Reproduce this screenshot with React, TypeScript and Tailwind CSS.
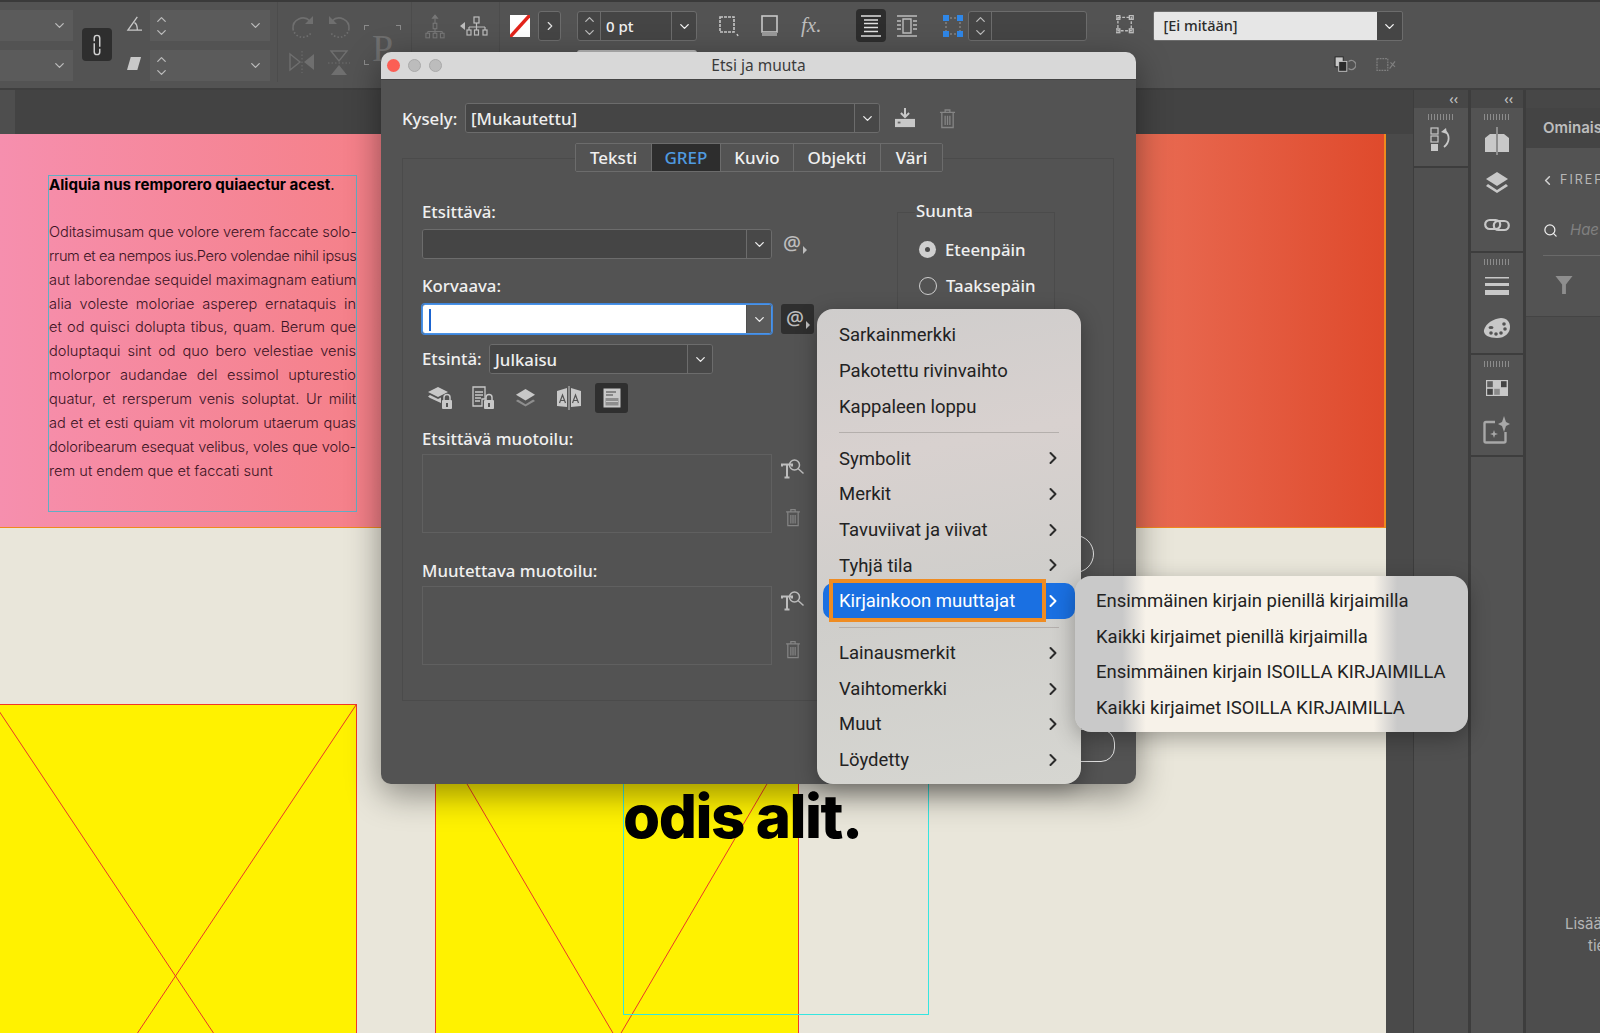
import { ChevronDown, ChevronUp, ChevronRight, ChevronLeft, Search } from "lucide-react";

const ui = "font-['Noto_Sans',sans-serif] font-medium";
const mac = "font-['Roboto',sans-serif]";

function Trash({ className = "" }: { className?: string }) {
  return (
    <svg viewBox="0 0 18 22" className={className} fill="none" stroke="#858585" strokeWidth="1.4">
      <path d="M1 4.5h16M6.5 4.5V2h5v2.5M3 4.5V20.5h12V4.5M6.5 8v10M9 8v10M11.5 8v10" />
    </svg>
  );
}

function AtButton({ active = false }: { active?: boolean }) {
  return (
    <div className={`relative flex h-[30px] w-[33px] items-center justify-center rounded-[3px] ${active ? "bg-[#2f2f2f]" : ""}`}>
      <span className={`${ui} -mt-[2px] -ml-[5px] text-[20px] text-[#bdbdbd]`}>@</span>
      <span className="absolute right-[4px] bottom-[5px] h-0 w-0 border-y-[4px] border-l-[4px] border-y-transparent border-l-[#bdbdbd]" />
    </div>
  );
}

function Field({ width, chevWidth = 25, white = false, text }: { width: number; chevWidth?: number; white?: boolean; text?: string }) {
  return (
    <div
      style={{ width }}
      className={`flex h-[30px] shrink-0 overflow-hidden rounded-[3px] border ${white ? "border-[#4b93e6] ring-1 ring-[#3f86dc]" : "border-[#6c6c6c]"}`}
    >
      <div className={`flex flex-1 items-center px-[5px] pt-[1px] text-[16.8px] text-[#eeeeee] ${white ? "bg-white" : "bg-[#454545]"}`}>
        {white ? <span className="ml-[1px] h-[22px] w-[2px] bg-[#1b64d0]" /> : text}
      </div>
      <div
        style={{ width: chevWidth }}
        className={`flex items-center justify-center border-l ${white ? "border-[#4f4f4f] bg-[#5a5a5a]" : "border-[#6c6c6c] bg-[#484848]"}`}
      >
        <ChevronDown size={15} strokeWidth={2.2} className="text-[#e8e8e8]" />
      </div>
    </div>
  );
}

function TypeSearch({ className = "" }: { className?: string }) {
  return (
    <svg viewBox="0 0 24 20" className={className} fill="none" stroke="#bdbdbd" strokeWidth="1.5">
      <path d="M1 7.5V5.5h10v2M6 5.5V18M3.5 18.5h5" strokeWidth="2" />
      <circle cx="13.5" cy="6" r="5" />
      <path d="M17 9.5l5.5 5" />
    </svg>
  );
}

function SearchIcons({ active }: { active: number }) {
  const icons = [
    <svg key="a" viewBox="0 0 26 24" className="h-[24px] w-[26px]">
      <path d="M11 1l10 5-10 5L1 6z" fill="#c8c8c8" />
      <path d="M3 9l8 4 3-1.5V17L3 12l-2-1.5z" fill="#c8c8c8" />
      <rect x="15" y="14" width="10" height="9" rx="1" fill="#c8c8c8" />
      <path d="M17 14v-2.5a3 3 0 016 0V14" fill="none" stroke="#c8c8c8" strokeWidth="1.5" />
      <rect x="19" y="17" width="2" height="4" fill="#535353" />
    </svg>,
    <svg key="b" viewBox="0 0 24 24" className="h-[24px] w-[24px]">
      <path d="M2 1h12v12H11v7H2z" fill="none" stroke="#c8c8c8" strokeWidth="1.3" />
      <path d="M4 6h8M4 9h8M4 12h6M4 15h5" stroke="#c8c8c8" strokeWidth="1.3" />
      <rect x="13" y="14" width="10" height="9" rx="1" fill="#c8c8c8" />
      <path d="M15 14v-2.5a3 3 0 016 0V14" fill="none" stroke="#c8c8c8" strokeWidth="1.5" />
      <rect x="17" y="17" width="2" height="4" fill="#535353" />
    </svg>,
    <svg key="c" viewBox="0 0 24 22" className="h-[21px] w-[23px]">
      <path d="M12 1l10 6-10 6L2 7z" fill="#c8c8c8" />
      <path d="M4 12l8 5 8-5 2 1.5-10 6-10-6z" fill="#8e8e8e" />
    </svg>,
    <svg key="d" viewBox="0 0 26 24" className="h-[24px] w-[26px]">
      <path d="M1 5l10-3v19l-10-1zM25 5l-10-3v19l10-1z" fill="#c8c8c8" />
      <path d="M13 0v24" stroke="#c8c8c8" strokeWidth="1" />
      <path d="M3.5 17l3-8 3 8M4.5 14.5h4M16.5 17l3-8 3 8M17.5 14.5h4" fill="none" stroke="#535353" strokeWidth="1.2" />
    </svg>,
    <svg key="e" viewBox="0 0 18 20" className="h-[20px] w-[18px]">
      <rect x="0.5" y="0.5" width="17" height="19" fill="#c8c8c8" />
      <path d="M3 4h10M3 7h7" stroke="#444" strokeWidth="1.2" />
      <rect x="2.5" y="10" width="13" height="7.5" fill="#8e8e8e" />
      <path d="M3 13.5h12" stroke="#c8c8c8" strokeWidth="1" />
    </svg>,
  ];
  return (
    <div className="mt-[9px] flex h-[30px] items-center pl-[1px]">
      {icons.map((icon, i) => (
        <div key={i} className={`flex h-[30px] w-[33px] items-center justify-center rounded-[3px] ${i < 4 ? "mr-[10px]" : ""} ${i === active ? "bg-[#2f2f2f]" : ""}`}>
          {icon}
        </div>
      ))}
    </div>
  );
}

function FormatBox() {
  return (
    <div className="mt-[5px] flex items-start">
      <div className="h-[79px] w-[350px] border border-[#606060] bg-[#535353]" />
      <div className="ml-[9px] flex h-[79px] w-[24px] flex-col items-center justify-between pt-[5px] pb-[6px]">
        <TypeSearch className="h-[20px] w-[24px]" />
        <Trash className="h-[19px] w-[16px]" />
      </div>
    </div>
  );
}

function Dialog() {
  const tabs = [
    { label: "Teksti", w: 76 },
    { label: "GREP", w: 69, active: true },
    { label: "Kuvio", w: 73 },
    { label: "Objekti", w: 87 },
    { label: "Väri", w: 61 },
  ];
  return (
    <div className={`${ui} absolute top-[52px] left-[381px] flex h-[732px] w-[755px] flex-col overflow-hidden rounded-[10px] bg-[#535353] shadow-[0_10px_34px_rgba(0,0,0,0.42)]`}>
      <div className="relative flex h-[28px] shrink-0 items-center justify-center border-b border-[#444] bg-[#d8d8d8] pt-[1px] text-[15.5px] font-normal text-[#3b3b3b]">
        <div className="absolute top-[7px] left-[6px] flex gap-[8px]">
          <span className="h-[13px] w-[13px] rounded-full bg-[#fb5f55]" />
          <span className="h-[13px] w-[13px] rounded-full border border-[#a9a9a9] bg-[#bcbcbc]" />
          <span className="h-[13px] w-[13px] rounded-full border border-[#a9a9a9] bg-[#bcbcbc]" />
        </div>
        Etsi ja muuta
      </div>

      <div className="mt-[23px] flex h-[30px] items-center pl-[21px] text-[16.8px] text-[#f0f0f0]">
        <span className="w-[63px] pt-[1px]">Kysely:</span>
        <Field width={415} text="[Mukautettu]" />
        <svg viewBox="0 0 24 22" className="ml-[14px] h-[20px] w-[22px]">
          <path d="M12 0v9M7.5 5.5L12 10l4.5-4.5" fill="none" stroke="#c8c8c8" strokeWidth="2.2" />
          <rect x="1" y="12" width="22" height="9" fill="#c8c8c8" />
          <rect x="4" y="15" width="3" height="2" fill="#666" />
        </svg>
        <Trash className="ml-[23px] h-[21px] w-[17px]" />
      </div>

      <div className="relative z-10 mt-[10px] ml-[194px] flex h-[29px] w-fit overflow-hidden rounded-[2px] border border-[#6c6c6c] text-[17px]">
        {tabs.map((t) => (
          <div
            key={t.label}
            style={{ width: t.w }}
            className={`flex items-center justify-center border-r border-[#6c6c6c] last:border-r-0 ${t.active ? "bg-[#2d2d2d] text-[#4f9be0]" : "bg-[#535353] text-[#f0f0f0]"}`}
          >
            {t.label}
          </div>
        ))}
      </div>

      <div className="-mt-[14px] ml-[21px] flex h-[543px] w-[712px] border border-[#4b4b4b] pl-[19px] text-[16.8px] text-[#f0f0f0]">
        <div className="w-[475px] pt-[43px]">
          <div className="h-[20px] leading-[20px]">Etsittävä:</div>
          <div className="mt-[7px] flex items-center">
            <Field width={350} />
            <div className="ml-[6px]"><AtButton /></div>
          </div>
          <div className="mt-[17px] h-[20px] leading-[20px]">Korvaava:</div>
          <div className="mt-[8px] flex items-center">
            <Field width={350} white />
            <div className="ml-[9px]"><AtButton active /></div>
          </div>
          <div className="mt-[10px] flex items-center">
            <span className="w-[67px]">Etsintä:</span>
            <Field width={224} text="Julkaisu" />
          </div>
          <SearchIcons active={4} />
          <div className="mt-[16px] h-[20px] leading-[20px]">Etsittävä muotoilu:</div>
          <FormatBox />
          <div className="mt-[28px] h-[20px] leading-[20px]">Muutettava muotoilu:</div>
          <FormatBox />
        </div>
        <div className="mt-[53px] h-[150px] w-[158px] border border-[#4b4b4b]">
          <div className="-mt-[12px] ml-[17px] w-fit bg-[#535353] px-[1px] leading-[20px]">Suunta</div>
          <div className="mt-[16px] ml-[21px] flex items-center gap-[9px]">
            <span className="flex h-[17px] w-[17px] items-center justify-center rounded-full bg-[#cfcfcf]">
              <span className="h-[5px] w-[5px] rounded-full bg-[#4a4a4a]" />
            </span>
            Eteenpäin
          </div>
          <div className="mt-[11px] ml-[21px] flex items-center gap-[9px]">
            <span className="h-[18px] w-[18px] rounded-full border border-[#cfcfcf]" />
            Taaksepäin
          </div>
        </div>
      </div>

      {/* buttons behind the open menu */}
      <div className="absolute top-[483px] left-[600px] h-[38px] w-[113px] rounded-full border border-[#e2e2e2]" />
      <div className="absolute top-[677px] left-[620px] h-[33px] w-[114px] rounded-[14px] border border-[#e2e2e2]" />
    </div>
  );
}

function MenuRow({ label, arrow = true, hl = false }: { label: string; arrow?: boolean; hl?: boolean }) {
  return (
    <div className={`relative mx-[6px] flex h-[35.7px] items-center rounded-[10px] pr-[12px] pl-[16px] ${hl ? "bg-[#1a70e2] text-white" : "text-[#222222]"}`}>
      <span className="flex-1 pt-[2px]">{label}</span>
      {arrow && <ChevronRight size={20} strokeWidth={2.4} className={hl ? "text-white" : "text-[#2b2b2b]"} />}
      {hl && <div className="absolute -top-[4px] left-[6px] h-[43px] w-[217px] border-[4px] border-[#ef8c22]" />}
    </div>
  );
}

function Sep() {
  return (
    <div className="flex h-[16px] items-center px-[22px]">
      <div className="h-px w-full bg-[#b4afac]" />
    </div>
  );
}

function Menus() {
  const sub = [
    "Ensimmäinen kirjain pienillä kirjaimilla",
    "Kaikki kirjaimet pienillä kirjaimilla",
    "Ensimmäinen kirjain ISOILLA KIRJAIMILLA",
    "Kaikki kirjaimet ISOILLA KIRJAIMILLA",
  ];
  return (
    <>
      <div className={`${mac} absolute top-[309px] left-[817px] h-[475px] w-[264px] rounded-[16px] bg-[linear-gradient(170deg,#cfcdcc_0%,#d8d1cf_30%,#cfcecb_60%,#d6d6d1_100%)] pt-[8.5px] text-[18.5px] shadow-[0_6px_22px_rgba(0,0,0,0.3)]`}>
        <MenuRow label="Sarkainmerkki" arrow={false} />
        <MenuRow label="Pakotettu rivinvaihto" arrow={false} />
        <MenuRow label="Kappaleen loppu" arrow={false} />
        <Sep />
        <MenuRow label="Symbolit" />
        <MenuRow label="Merkit" />
        <MenuRow label="Tavuviivat ja viivat" />
        <MenuRow label="Tyhjä tila" />
        <MenuRow label="Kirjainkoon muuttajat" hl />
        <Sep />
        <MenuRow label="Lainausmerkit" />
        <MenuRow label="Vaihtomerkki" />
        <MenuRow label="Muut" />
        <MenuRow label="Löydetty" />
      </div>
      <div className={`${mac} absolute top-[576px] left-[1075px] h-[156px] w-[393px] rounded-[16px] bg-[linear-gradient(90deg,#c9c9c9_0%,#c9c9c9_12%,#f7f2e9_18%,#f7f2e9_76%,#c9c9c9_82%,#c9c9c9_100%)] pt-[7px] text-[18.5px] text-[#222222] shadow-[0_6px_22px_rgba(0,0,0,0.3)]`}>
        {sub.map((s) => (
          <div key={s} className="flex h-[35.7px] items-center pt-[2px] pl-[21px]">{s}</div>
        ))}
      </div>
    </>
  );
}

function XBox({ className }: { className: string }) {
  return (
    <div className={`relative shrink-0 border border-[#f0392a] bg-[#fff200] ${className}`}>
      <svg viewBox="0 0 100 100" preserveAspectRatio="none" className="absolute inset-0 h-full w-full">
        <path d="M0 0L100 100M100 0L0 100" stroke="#e8372a" strokeWidth="1" vectorEffect="non-scaling-stroke" fill="none" />
      </svg>
    </div>
  );
}

function Page() {
  const lines = [
    { t: "Oditasimusam que volore verem faccate solo-", c: "tracking-[-0.1px]" },
    { t: "rrum et ea nempos ius.Pero volendae nihil ipsus", c: "tracking-[-0.38px]" },
    { t: "aut laborendae sequidel maximagnam eatium", c: "" },
    { t: "alia voleste moloriae asperep ernataquis in", c: "" },
    { t: "et od quisci dolupta tibus, quam. Berum que", c: "" },
    { t: "doluptaqui sint od quo bero velestiae venis", c: "" },
    { t: "molorpor audandae del essimol upturestio", c: "" },
    { t: "quatur, et rersperum venis soluptat. Ur milit", c: "" },
    { t: "ad et et esti quiam vit molorum utaerum quas", c: "tracking-[-0.1px]" },
    { t: "doloribearum esequat velibus, voles que volo-", c: "tracking-[-0.2px]" },
  ];
  return (
    <div className="relative h-full w-[1386px] overflow-hidden bg-[#e9e6da] font-['Inter',sans-serif]">
      <div className="h-[394px] border-r-2 border-b border-[#ef8a1d] bg-[linear-gradient(90deg,#f68fae_0%,#f58088_27%,#e96c54_82%,#df4a2c_100%)] pt-[41px] pl-[48px]">
        <div className="h-[337px] w-[309px] border border-[#62adc4] text-[14.6px] leading-[23.9px] text-[#3c1424]">
          <div className="-mt-[3px] text-[15.1px] font-bold text-black">
            Aliquia nus remporero quiaectur acest<span className="font-normal">.</span>
          </div>
          <div className="h-[23.9px]" />
          {lines.map((l) => (
            <div key={l.t} className={`font-light whitespace-nowrap [text-align-last:justify] ${l.c}`}>{l.t}</div>
          ))}
          <div className="font-light">rem ut endem que et faccati sunt</div>
        </div>
      </div>
      <div className="flex pt-[176px]">
        <XBox className="-ml-[6px] h-[544px] w-[363px]" />
        <XBox className="mt-[26px] ml-[78px] h-[620px] w-[364px]" />
      </div>
      <div className="absolute top-[560px] left-[623px] h-[321px] w-[306px] border border-[#35e5e0]" />
      <div className="absolute top-[646px] left-[623px] text-[60px] leading-[72px] font-extrabold tracking-[-1.45px] text-black">odis alit.</div>
    </div>
  );
}

function Grip() {
  return <div className="mx-auto h-[6px] w-[26px] bg-[repeating-linear-gradient(90deg,#8c8c8c_0,#8c8c8c_1px,transparent_1px,transparent_3px)]" />;
}

function PanelIcon({ children }: { children: React.ReactNode }) {
  return <div className="flex h-[42px] items-center justify-center">{children}</div>;
}

function Panels() {
  return (
    <div className="flex h-full w-[187px] bg-[#3d3d3d] pl-[1px]">
      <div className="w-[54px]">
        <div className="flex h-[18px] items-center justify-end bg-[#474747] pr-[10px] text-[14px] leading-none text-[#c8c8c8]">‹‹</div>
        <div className="h-[60px] border-b-2 border-[#3d3d3d] bg-[#535353] pt-[6px]">
          <Grip />
          <div className="mt-[7px] flex justify-center">
            <svg viewBox="0 0 22 26" className="h-[26px] w-[22px]" fill="none">
              <rect x="1" y="1" width="7" height="6" stroke="#c8c8c8" strokeWidth="1.2" />
              <rect x="1" y="9" width="7" height="6" stroke="#c8c8c8" strokeWidth="1.2" />
              <rect x="1" y="17" width="7" height="7" fill="#c8c8c8" />
              <path d="M15 4c5 4 5 11-1 16" stroke="#c8c8c8" strokeWidth="1.8" />
              <path d="M11 5l5-4 1 6z" fill="#c8c8c8" />
            </svg>
          </div>
        </div>
        <div className="h-[865px] bg-[#505050]" />
      </div>
      <div className="ml-[3px] w-[52px]">
        <div className="flex h-[18px] items-center justify-end bg-[#474747] pr-[10px] text-[14px] leading-none text-[#c8c8c8]">‹‹</div>
        <div className="h-[145px] border-b-2 border-[#3d3d3d] bg-[#535353] pt-[6px]">
          <Grip />
          <PanelIcon>
            <svg viewBox="0 0 26 28" className="h-[28px] w-[26px]">
              <path d="M1 11l5-4h6v18H1zM25 11l-5-4h-6v18h11z" fill="#c8c8c8" />
              <path d="M13 0v28" stroke="#c8c8c8" strokeWidth="1" />
            </svg>
          </PanelIcon>
          <PanelIcon>
            <svg viewBox="0 0 24 24" className="h-[24px] w-[24px]">
              <path d="M12 1l11 7-11 7L1 8z" fill="#c8c8c8" />
              <path d="M3 13l9 6 9-6 2 2-11 7L1 15z" fill="#c8c8c8" />
            </svg>
          </PanelIcon>
          <PanelIcon>
            <svg viewBox="0 0 26 14" className="h-[14px] w-[26px]" fill="none" stroke="#c8c8c8" strokeWidth="2.2">
              <rect x="1.2" y="2" width="15" height="9" rx="4.5" />
              <rect x="9.8" y="3" width="15" height="9" rx="4.5" />
            </svg>
          </PanelIcon>
        </div>
        <div className="h-[102px] border-b-2 border-[#3d3d3d] bg-[#535353] pt-[6px]">
          <Grip />
          <PanelIcon>
            <svg viewBox="0 0 24 20" className="h-[20px] w-[24px]">
              <rect y="1" width="24" height="1.5" fill="#c8c8c8" />
              <rect y="7" width="24" height="3" fill="#c8c8c8" />
              <rect y="14" width="24" height="5" fill="#c8c8c8" />
            </svg>
          </PanelIcon>
          <PanelIcon>
            <svg viewBox="0 0 28 22" className="h-[22px] w-[28px]">
              <path d="M1 13C3 6 10 2 18 1c6 0 9 4 9 9 0 6-5 11-13 11C6 21 0 18 1 13z" fill="#c8c8c8" />
              <circle cx="21" cy="7" r="1.8" fill="#535353" />
              <circle cx="22" cy="12" r="1.8" fill="#535353" />
              <circle cx="18" cy="16" r="1.8" fill="#535353" />
              <circle cx="13" cy="17" r="1.8" fill="#535353" />
              <circle cx="8" cy="16" r="1.8" fill="#535353" />
              <ellipse cx="8" cy="10.5" rx="2.5" ry="1.5" fill="#535353" />
            </svg>
          </PanelIcon>
        </div>
        <div className="h-[102px] border-b-2 border-[#3d3d3d] bg-[#535353] pt-[6px]">
          <Grip />
          <PanelIcon>
            <svg viewBox="0 0 22 16" className="h-[16px] w-[22px]">
              <rect width="22" height="16" fill="#c8c8c8" />
              <rect x="1.2" y="1.2" width="5.6" height="6" fill="#5f5f5f" />
              <rect x="15" y="1.2" width="5.6" height="6" fill="#444" />
              <rect x="1.2" y="8.8" width="5.6" height="6" fill="#444" />
              <rect x="8.2" y="8.8" width="5.6" height="6" fill="#8a8a8a" />
            </svg>
          </PanelIcon>
          <PanelIcon>
            <svg viewBox="0 0 28 30" className="h-[30px] w-[28px]" fill="none">
              <path d="M12 7H3a1.5 1.5 0 00-1.5 1.5V26A1.5 1.5 0 003 27.5h18a1.5 1.5 0 001.5-1.5V17" stroke="#a8a8a8" strokeWidth="2.4" />
              <path d="M21 1l2 6 4 2-4 2-2 6-2-6-4-2 4-2z" fill="#a8a8a8" />
              <path d="M11 15l1 3 3 1-3 1-1 3-1-3-3-1 3-1z" fill="#a8a8a8" />
            </svg>
          </PanelIcon>
        </div>
        <div className="h-[600px] bg-[#535353]" />
      </div>
      <div className="ml-[3px] flex-1 overflow-hidden bg-[#4d4d4d] whitespace-nowrap">
        <div className="h-[18px] bg-[#474747]" />
        <div className="flex h-[40px] items-center bg-[#444444] pl-[17px] font-['Inter',sans-serif] text-[15px] font-semibold text-[#bdbdbd]">Ominaisuudet</div>
        <div className="h-[169px] border-b border-[#444] bg-[#535353] font-['Inter',sans-serif]">
          <div className="flex h-[64px] items-center pl-[14px] text-[12.5px] tracking-[2px] text-[#b8b8b8]">
            <ChevronLeft size={15} strokeWidth={2.5} className="mr-[5px] shrink-0 text-[#d0d0d0]" />
            FIREFLY
          </div>
          <div className="ml-[17px] flex h-[44px] items-center border-b border-[#6a6a6a] pb-[6px]">
            <Search size={15} className="shrink-0 text-[#eeeeee]" />
            <span className="ml-[12px] text-[15px] text-[#808080] italic">Hae</span>
          </div>
          <div className="flex items-center pt-[20px] pl-[29px]">
            <svg viewBox="0 0 18 20" className="h-[19px] w-[18px]">
              <path d="M0 0h18l-7 9v10H7V9z" fill="#8e8e8e" />
            </svg>
          </div>
        </div>
        <div className="pt-[596px] pl-[39px] font-['Inter',sans-serif] text-[15px] leading-[22px] text-[#b5b5b5]">
          <div>Lisää</div>
          <div className="pl-[23px]">tietoja</div>
        </div>
      </div>
    </div>
  );
}

function ToolChevron() {
  return <ChevronDown size={15} strokeWidth={2} className="text-[#bcbcbc]" />;
}

function Stepper() {
  return (
    <div className="flex flex-col items-center">
      <ChevronUp size={15} strokeWidth={2} className="-mb-[2px] text-[#bcbcbc]" />
      <ChevronDown size={15} strokeWidth={2} className="text-[#bcbcbc]" />
    </div>
  );
}

function Toolbar() {
  const dim = "#6f6f6f";
  return (
    <div className="flex h-[90px] shrink-0 border-t-2 border-b-2 border-t-[#3a3a3a] border-b-[#3f3f3f] bg-[#535353] font-['Noto_Sans',sans-serif] text-[#f0f0f0]">
      {/* font and size fields */}
      <div className="flex w-[73px] flex-col gap-[9px] pt-[8px]">
        {[0, 1].map((i) => (
          <div key={i} className="flex h-[31px] items-center justify-end bg-[#5b5b5b] pr-[6px]"><ToolChevron /></div>
        ))}
      </div>
      <div className="mt-[26px] ml-[9px] flex h-[33px] w-[30px] items-center justify-center rounded-[4px] bg-[#2e2e2e]">
        <svg viewBox="0 0 10 24" className="h-[22px] w-[10px]" fill="none" stroke="#d0d0d0" strokeWidth="1.6">
          <path d="M2 8V4.5a3 3 0 016 0V14M8 16v3.5a3 3 0 01-6 0V10" />
        </svg>
      </div>
      <div className="ml-[12px] flex w-[20px] flex-col items-center pt-[14px]">
        <svg viewBox="0 0 18 16" className="h-[15px] w-[17px]" fill="none" stroke="#c8c8c8" strokeWidth="1.4">
          <path d="M12 1L2 15h15M9 7c2 1 3 4 3 8" />
        </svg>
        <svg viewBox="0 0 16 16" className="mt-[25px] h-[15px] w-[15px]"><path d="M4 1h11l-4 14H0z" fill="#c8c8c8" /></svg>
      </div>
      <div className="ml-[6px] flex w-[120px] flex-col gap-[9px] pt-[8px]">
        {[0, 1].map((i) => (
          <div key={i} className="flex h-[31px] items-center justify-between bg-[#5b5b5b] pr-[7px] pl-[4px]">
            <Stepper />
            <ToolChevron />
          </div>
        ))}
      </div>
      <div className="mx-[7px] h-[80px] w-px bg-[#4c4c4c]" />
      {/* rotate and flip */}
      <div className="ml-[4px] grid h-fit w-[64px] grid-cols-2 gap-x-[11px] gap-y-[10px] pt-[12px]">
        <svg viewBox="0 0 26 26" className="h-[26px] w-[26px]" fill="none" stroke={dim} strokeWidth="1.6">
          <path d="M4 15a10 10 0 0117-8" />
          <path d="M4 15a10 10 0 0018 4" strokeDasharray="1.5 2" />
          <path d="M24 2v8h-8z" fill={dim} stroke="none" />
        </svg>
        <svg viewBox="0 0 26 26" className="h-[26px] w-[26px]" fill="none" stroke={dim} strokeWidth="1.6">
          <path d="M22 15A10 10 0 005 7" />
          <path d="M22 15a10 10 0 01-18 4" strokeDasharray="1.5 2" />
          <path d="M2 2v8h8z" fill={dim} stroke="none" />
        </svg>
        <svg viewBox="0 0 26 24" className="h-[24px] w-[26px]">
          <path d="M1 4l10 8-10 8z" fill="none" stroke={dim} strokeWidth="1.4" />
          <path d="M25 4l-10 8 10 8z" fill={dim} />
          <path d="M13 1v22" stroke={dim} strokeDasharray="1.5 2" />
        </svg>
        <svg viewBox="0 0 24 26" className="h-[26px] w-[24px]">
          <path d="M4 1l8 10 8-10z" fill="none" stroke={dim} strokeWidth="1.4" />
          <path d="M4 25l8-10 8 10z" fill={dim} />
          <path d="M1 13h22" stroke={dim} strokeDasharray="1.5 2" />
        </svg>
      </div>
      <div className="relative mt-[23px] ml-[11px] flex h-[40px] w-[37px] items-center justify-center font-['Liberation_Serif',serif] text-[38px] leading-none text-[#6f6f6f]">
        <span className="mt-[6px]">P</span>
        <span className="absolute top-0 left-0 h-[5px] w-[5px] border-t border-l border-[#8a8a8a]" />
        <span className="absolute top-0 right-0 h-[5px] w-[5px] border-t border-r border-[#8a8a8a]" />
        <span className="absolute bottom-0 left-0 h-[5px] w-[5px] border-b border-l border-[#8a8a8a]" />
      </div>
      <div className="ml-[10px] h-[80px] w-px bg-[#4c4c4c]" />
      {/* hierarchy */}
      <svg viewBox="0 0 22 28" className="mt-[11px] ml-[13px] h-[26px] w-[20px]" fill="none" stroke="#777" strokeWidth="1.2">
        <path d="M11 1l4 5H7z" fill="#777" stroke="none" />
        <path d="M11 6v5M11 17v3M3 20h16M3 20v2M19 20v2M11 20v2" />
        <rect x="9" y="11" width="4" height="6" />
        <rect x="1" y="22" width="4" height="5" />
        <rect x="9" y="22" width="4" height="5" />
        <rect x="17" y="22" width="4" height="5" />
      </svg>
      <svg viewBox="0 0 28 22" className="mt-[13px] ml-[15px] h-[22px] w-[28px]" fill="none" stroke="#bdbdbd" strokeWidth="1.2">
        <path d="M0 11l5-4v8z" fill="#bdbdbd" stroke="none" />
        <rect x="14" y="2" width="5" height="6" />
        <path d="M16.5 8v4M9 12h16M9 12v3M16.5 12v3M25 12v3" />
        <rect x="7" y="15" width="4" height="5" />
        <rect x="14.5" y="15" width="4" height="5" />
        <rect x="23" y="15" width="4" height="5" />
      </svg>
      <div className="ml-[11px] h-[80px] w-px bg-[#4c4c4c]" />
      {/* stroke */}
      <div className="mt-[13px] ml-[10px] h-[22px] w-[20px] overflow-hidden bg-white">
        <svg viewBox="0 0 20 22" className="h-full w-full"><path d="M0 22L20 0" stroke="#e2231a" strokeWidth="3.5" /></svg>
      </div>
      <div className="mt-[9px] ml-[8px] flex h-[30px] w-[23px] items-center justify-center rounded-[3px] border border-[#6c6c6c] bg-[#454545]">
        <ChevronRight size={14} strokeWidth={2} className="text-[#e0e0e0]" />
      </div>
      <div className="mt-[9px] ml-[16px] flex w-[120px] flex-col gap-[9px]">
        <div className="flex h-[30px] overflow-hidden rounded-[3px] border border-[#6c6c6c] bg-[#454545] text-[15px] font-medium">
          <div className="flex w-[23px] items-center justify-center border-r border-[#6c6c6c]"><Stepper /></div>
          <div className="flex flex-1 items-center pl-[5px]">0 pt</div>
          <div className="flex w-[25px] items-center justify-center border-l border-[#6c6c6c]"><ChevronDown size={15} strokeWidth={2.2} /></div>
        </div>
        {/* second row field, only its top edge shows above the dialog */}
        <div className="h-[30px] rounded-[3px] border-t-2 border-[#b5b5b5]" />
      </div>
      {/* frame icons */}
      <svg viewBox="0 0 22 22" className="mt-[13px] ml-[20px] h-[22px] w-[22px]" fill="none" stroke="#c8c8c8" strokeWidth="1.6">
        <path d="M3 2h14v15H3z" strokeDasharray="3 1" />
        <path d="M20 19l1 2" />
      </svg>
      <svg viewBox="0 0 20 22" className="mt-[13px] ml-[21px] h-[22px] w-[20px]">
        <rect x="2" y="1" width="15" height="16" fill="none" stroke="#c8c8c8" strokeWidth="1.6" />
        <rect x="2" y="17" width="15" height="4" fill="#9a9a9a" />
      </svg>
      <div className="mt-[8px] ml-[21px] font-['Liberation_Serif',serif] text-[21px] leading-[30px] text-[#bdbdbd] italic">fx.</div>
      <div className="mt-[7px] ml-[35px] flex h-[33px] w-[30px] items-center justify-center rounded-[4px] bg-[#2d2d2d]">
        <svg viewBox="0 0 20 22" className="h-[22px] w-[20px]" stroke="#e0e0e0" strokeWidth="1.4"><path d="M0 1h20M3 5h14M3 8.5h14M3 12.5h14M3 16.5h14M0 21h20" /></svg>
      </div>
      <svg viewBox="0 0 20 22" className="mt-[13px] ml-[11px] h-[22px] w-[20px]" fill="none" stroke="#bdbdbd" strokeWidth="1.4"><path d="M0 1h20M0 21h20M6 4h8v14H6zM0 6h4M0 10h4M0 14h4M16 6h4M16 10h4M16 14h4" /></svg>
      <svg viewBox="0 0 20 22" className="mt-[13px] ml-[26px] h-[22px] w-[20px]">
        <path d="M3 3h14M3 19h14M3 3v16M17 3v16" stroke="#9a9a9a" strokeWidth="1" strokeDasharray="2 2" />
        <rect x="0" y="0" width="6" height="6" fill="#2f87e8" /><rect x="14" y="0" width="6" height="6" fill="#2f87e8" />
        <rect x="0" y="16" width="6" height="6" fill="#2f87e8" /><rect x="14" y="16" width="6" height="6" fill="#2f87e8" />
      </svg>
      <div className="mt-[9px] ml-[5px] flex h-[30px] w-[119px] overflow-hidden rounded-[3px] border border-[#6c6c6c] bg-[#454545]">
        <div className="flex w-[23px] items-center justify-center border-r border-[#6c6c6c]"><Stepper /></div>
      </div>
      <svg viewBox="0 0 22 22" className="mt-[13px] ml-[29px] h-[22px] w-[21px]" fill="none" stroke="#bdbdbd" strokeWidth="1.4">
        <path d="M2 2h14v14H2z" strokeDasharray="3 1.5" />
        <rect x="0" y="0" width="4" height="4" /><rect x="14" y="0" width="4" height="4" />
        <rect x="0" y="14" width="4" height="4" /><rect x="14" y="14" width="4" height="4" />
      </svg>
      <div className="mt-[9px] ml-[16px] flex h-[30px] w-[250px] overflow-hidden rounded-[2px] border border-[#6c6c6c] bg-[#454545] text-[14.5px] font-medium">
        <div className="flex flex-1 items-center bg-[#e6e6e6] pl-[9px] text-[#2b2b2b]">[Ei mitään]</div>
        <div className="flex w-[25px] items-center justify-center"><ChevronDown size={15} strokeWidth={2.2} /></div>
      </div>
      <div className="absolute top-[56px] left-[1334px] flex items-center gap-[19px]">
        <svg viewBox="0 0 24 20" className="h-[18px] w-[22px]" fill="none">
          <rect x="1" y="1" width="9" height="11" fill="#c8c8c8" stroke="#222" />
          <rect x="5" y="6" width="9" height="11" fill="#2b2b2b" stroke="#c8c8c8" />
          <path d="M16 6a5 5 0 110 8" stroke="#8e8e8e" strokeWidth="1.4" />
        </svg>
        <svg viewBox="0 0 24 20" className="h-[18px] w-[22px]" fill="none" stroke="#808080" strokeWidth="1.3">
          <rect x="2" y="3" width="12" height="13" strokeDasharray="2 1" />
          <path d="M16 14l6-8M17 7l5 5" />
        </svg>
      </div>
    </div>
  );
}

export default function App() {
  return (
    <div className="relative flex h-[1033px] w-[1600px] flex-col overflow-hidden bg-[#4a4a4a]">
      <Toolbar />
      <div className="flex min-h-0 flex-1">
        <div className="flex w-[1413px] flex-col">
          <div className="flex h-[44px] shrink-0 bg-[#434343]">
            <div className="h-full w-[15px] bg-[#4e4e4e]" />
          </div>
          <div className="min-h-0 flex-1 bg-[#4a4a4a]">
            <Page />
          </div>
        </div>
        <Panels />
      </div>
      <Dialog />
      <Menus />
    </div>
  );
}
